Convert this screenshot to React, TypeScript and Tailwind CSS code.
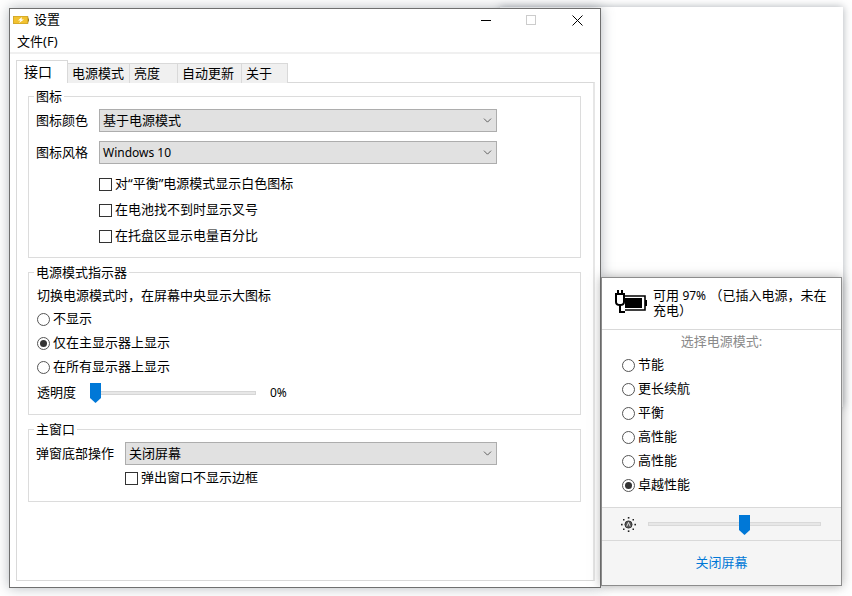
import type { ReactNode } from "react";
import { ChevronDown } from "lucide-react";

const FONT = "font-['Noto_Sans','Noto_Sans_CJK_SC',sans-serif]";

function Radio({ checked, label }: { checked?: boolean; label: string }) {
  return (
    <div className="flex items-center h-[24px]">
      <span className="w-[13px] h-[13px] rounded-full border border-[#555] flex items-center justify-center shrink-0">
        {checked && <span className="w-[7px] h-[7px] rounded-full bg-[#333]" />}
      </span>
      <span className="ml-[3px]">{label}</span>
    </div>
  );
}

function Check({ label }: { label: string }) {
  return (
    <div className="flex items-center h-[26px]">
      <span className="w-[13px] h-[13px] border border-[#333] bg-white shrink-0" />
      <span className="ml-[3px]">{label}</span>
    </div>
  );
}

function Select({ value, className }: { value: ReactNode; className: string }) {
  return (
    <div className={`h-[23px] bg-[#e1e1e1] border border-[#adadad] flex items-center justify-between pl-[3px] pr-[2px] ${className}`}>
      <span>{value}</span>
      <ChevronDown size={13} strokeWidth={1.5} className="text-[#444]" />
    </div>
  );
}

function Thumb() {
  return (
    <svg width="11" height="20" viewBox="0 0 11 20" className="shrink-0">
      <path d="M0 0H11V15L5.5 20L0 15Z" fill="#0078d7" />
    </svg>
  );
}

function Group({ title, className, children }: { title: string; className: string; children: ReactNode }) {
  return (
    <div className={`relative border border-[#dcdcdc] ${className}`}>
      <span className="absolute left-[5px] -top-[10px] bg-white px-[2px] leading-[18px]">{title}</span>
      {children}
    </div>
  );
}

function AppIcon() {
  return (
    <svg width="16" height="8" viewBox="0 0 16 8">
      <rect x="0" y="0" width="15" height="8" rx="1" fill="#f2c230" stroke="#9a7a1c" strokeWidth="0.6" />
      <rect x="15" y="2.5" width="1" height="3" fill="#9a7a1c" />
      <path d="M9 1L5 4.5H7.5L6 7L11 3.5H8.5Z" fill="#fff" />
    </svg>
  );
}

function PlugBattery() {
  return (
    <svg width="33" height="24" viewBox="0 0 33 24">
      <path d="M2 5V13Q2 16 6 16Q10 16 10 13V5Z" fill="none" stroke="#000" strokeWidth="2" />
      <path d="M4 1V6M8 1V6" stroke="#000" strokeWidth="2" />
      <path d="M6 16V23H11" fill="none" stroke="#000" strokeWidth="2" />
      <path d="M11 7H31V21H11" fill="none" stroke="#000" strokeWidth="1.6" />
      <rect x="11" y="9" width="17" height="10" fill="#000" />
      <rect x="31" y="11" width="2" height="6" fill="#000" />
    </svg>
  );
}

function Brightness() {
  return (
    <svg width="15" height="15" viewBox="0 0 15 15">
      <circle cx="7.5" cy="7.5" r="3.6" fill="#555" stroke="#222" strokeWidth="0.8" />
      <path d="M5.8 9.4L7.5 5.4L9.2 9.4" fill="none" stroke="#fff" strokeWidth="0.8" />
      <g fill="#222">
        <rect x="6.8" y="0" width="1.6" height="1.6" />
        <rect x="6.8" y="13.4" width="1.6" height="1.6" />
        <rect x="0" y="6.8" width="1.6" height="1.6" />
        <rect x="13.4" y="6.8" width="1.6" height="1.6" />
        <rect x="2" y="2" width="1.5" height="1.5" />
        <rect x="11.5" y="2" width="1.5" height="1.5" />
        <rect x="2" y="11.5" width="1.5" height="1.5" />
        <rect x="11.5" y="11.5" width="1.5" height="1.5" />
      </g>
    </svg>
  );
}

const tabs = [
  { label: "电源模式", w: "w-[62px]" },
  { label: "亮度", w: "w-[48px]" },
  { label: "自动更新", w: "w-[64px]" },
  { label: "关于", w: "w-[46px]" },
];

const modes = ["节能", "更长续航", "平衡", "高性能", "高性能", "卓越性能"];

function MainWindow() {
  return (
    <div className="absolute left-[9px] top-[8px] w-[592px] h-[580px] bg-white border border-[#6f6f6f] shadow-[0_0_12px_rgba(90,100,110,0.45)] flex flex-col">
      <div className="h-[22px] shrink-0 flex items-center pl-[3px]">
        <AppIcon />
        <span className="ml-[5px]">设置</span>
        <div className="ml-auto flex items-center">
          <span className="w-[10px] h-[1px] bg-black mr-[35px]" />
          <span className="w-[10px] h-[10px] border border-[#ccc] mr-[36px]" />
          <svg width="11" height="11" viewBox="0 0 11 11" className="mr-[17px]">
            <path d="M0.5 0.5L10.5 10.5M10.5 0.5L0.5 10.5" stroke="#000" strokeWidth="1" />
          </svg>
        </div>
      </div>
      <div className="h-[21px] shrink-0 flex items-center pl-[7px]">文件(F)</div>
      <div className="h-[2px] shrink-0 bg-[#f0f0f0]" />
      <div className="flex-1 pt-[6px] pl-[6px] pr-[5px] pb-[6px] flex flex-col">
        <div className="flex items-end h-[23px] shrink-0 relative z-10">
          <div className="w-[52px] h-[23px] border border-b-0 border-[#d9d9d9] bg-white flex items-center pl-[7px] pb-[2px] text-[14px]">接口</div>
          {tabs.map((t) => (
            <div key={t.label} className={`${t.w} h-[20px] bg-[#f0f0f0] border-t border-r border-[#d9d9d9] flex items-center pl-[4px]`}>
              {t.label}
            </div>
          ))}
        </div>
        <div className="flex-1 -mt-[1px] border border-[#d9d9d9] border-r-2 border-r-[#e6e6e6] pt-[13px] pl-[11px] pr-[12px]">
          <Group title="图标" className="h-[162px] pl-[7px]">
            <div className="flex items-center h-[23px] mt-[12px]">
              <span className="w-[63px]">图标颜色</span>
              <Select value="基于电源模式" className="w-[398px]" />
            </div>
            <div className="flex items-center h-[23px] mt-[9px]">
              <span className="w-[63px]">图标风格</span>
              <Select value={<span className="text-[12px]">Windows 10</span>} className="w-[398px]" />
            </div>
            <div className="ml-[63px] mt-[7px]">
              <Check label="对“平衡”电源模式显示白色图标" />
              <Check label="在电池找不到时显示叉号" />
              <Check label="在托盘区显示电量百分比" />
            </div>
          </Group>
          <Group title="电源模式指示器" className="h-[143px] mt-[14px] pl-[8px]">
            <div className="h-[20px] mt-[13px] flex items-center">切换电源模式时，在屏幕中央显示大图标</div>
            <div className="mt-[1px]">
              <Radio label="不显示" />
              <Radio checked label="仅在主显示器上显示" />
              <Radio label="在所有显示器上显示" />
            </div>
            <div className="flex items-center h-[22px] mt-[3px]">
              <span className="w-[53px]">透明度</span>
              <div className="relative w-[166px] h-[4px] bg-[#e7e7e7] border border-[#d6d6d6]">
                <div className="absolute left-[-1px] -top-[9px]">
                  <Thumb />
                </div>
              </div>
              <span className="ml-[14px] text-[12px]">0%</span>
            </div>
          </Group>
          <Group title="主窗口" className="h-[73px] mt-[14px] pl-[7px]">
            <div className="flex items-center h-[23px] mt-[12px]">
              <span className="w-[89px]">弹窗底部操作</span>
              <Select value="关闭屏幕" className="w-[372px]" />
            </div>
            <div className="ml-[89px] mt-[-1px] pt-[1px]">
              <Check label="弹出窗口不显示边框" />
            </div>
          </Group>
        </div>
      </div>
    </div>
  );
}

function Flyout() {
  return (
    <div className="absolute left-[601px] top-[277px] w-[241px] h-[309px] bg-white border border-[#8c8c8c] shadow-[0_0_10px_rgba(90,90,90,0.5)] flex flex-col">
      <div className="h-[52px] shrink-0 flex pl-[12px] pr-[12px] border-b border-[#d9d9d9]">
        <div className="mt-[11px] shrink-0">
          <PlugBattery />
        </div>
        <div className="ml-[6px] mt-[10px] leading-[15px]">
          可用 <span className="text-[12px]">97%</span> （已插入电源，未在充电）
        </div>
      </div>
      <div className="h-[23px] shrink-0 flex items-center justify-center text-[#8a8a8a]">选择电源模式:</div>
      <div className="pl-[20px] flex-1">
        {modes.map((m, i) => (
          <Radio key={i} label={m} checked={i === 5} />
        ))}
      </div>
      <div className="h-[34px] shrink-0 bg-[#f5f5f5] border-y border-[#d9d9d9] flex items-center pl-[19px]">
        <Brightness />
        <div className="relative ml-[12px] w-[173px] h-[4px] bg-[#e7e7e7] border border-[#d9d9d9]">
          <div className="absolute left-[90px] -top-[8px]">
            <Thumb />
          </div>
        </div>
      </div>
      <div className="h-[44px] shrink-0 bg-[#f5f5f5] flex items-center justify-center text-[#0078d7]">关闭屏幕</div>
    </div>
  );
}

export default function App() {
  return (
    <div className={`relative w-[852px] h-[596px] overflow-hidden bg-white text-[13px] text-black ${FONT}`}>
      {/* blank window behind the settings */}
      <div className="absolute left-[500px] top-[7px] w-[343px] h-[400px] bg-white shadow-[0_0_8px_rgba(90,100,110,0.5)]" />
      <MainWindow />
      <Flyout />
    </div>
  );
}
